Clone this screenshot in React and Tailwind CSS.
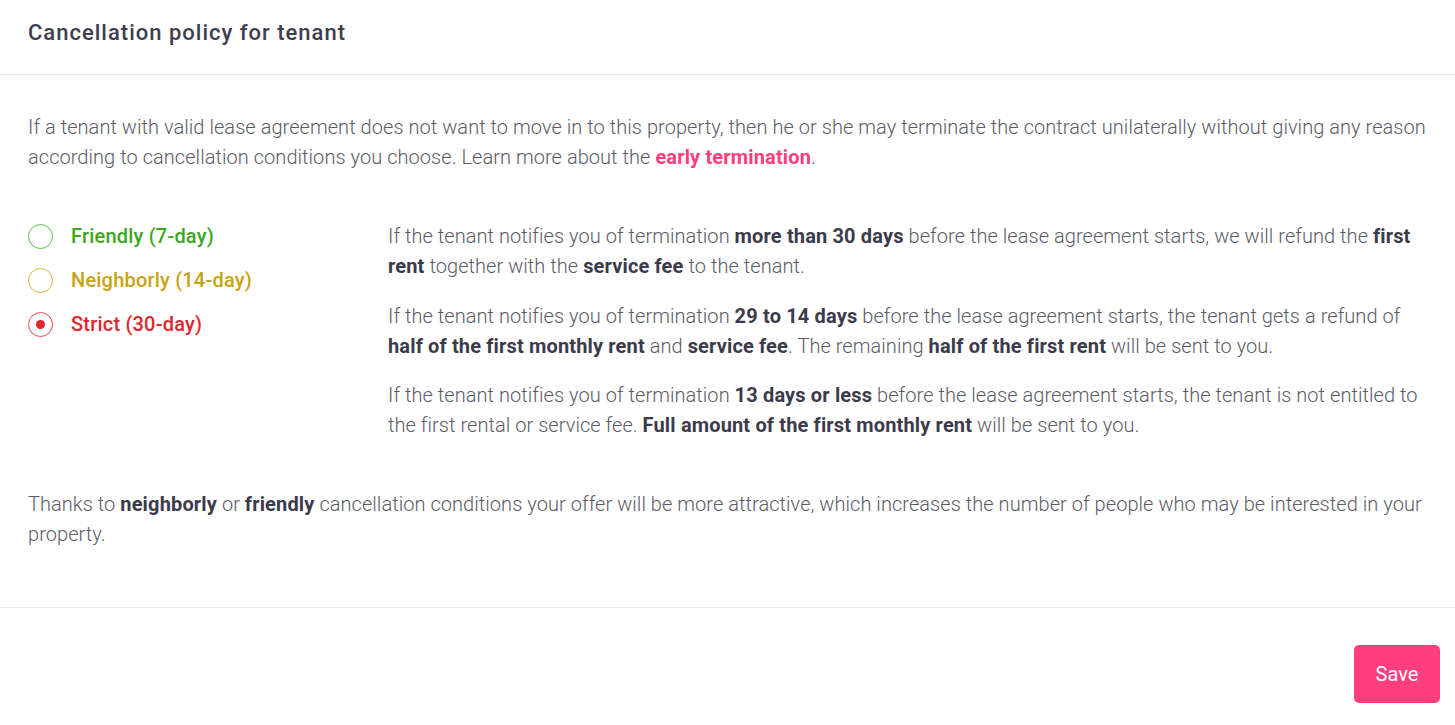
import React, { useState } from "react";

const options = [
  { id: "friendly", label: "Friendly (7-day)", ring: "border-[#5cc24a]", text: "text-[#3ea51f]", dot: "bg-[#3ea51f]" },
  { id: "neighborly", label: "Neighborly (14-day)", ring: "border-[#d2b53a]", text: "text-[#c6a312]", dot: "bg-[#c6a312]" },
  { id: "strict", label: "Strict (30-day)", ring: "border-[#e84a4f]", text: "text-[#e0262c]", dot: "bg-[#e0262c]" },
];

const B = ({ children }) => <strong className="font-bold tracking-[0.15px] text-[#3b3b4b]">{children}</strong>;

const App = () => {
  const [policy, setPolicy] = useState("strict");
  return (
    <div className="w-[1455px] min-h-[725px] bg-white text-[#5b5b68] font-['Roboto',sans-serif]">
      <div className="h-[75px] px-[28px] flex items-center border-b border-[#e8e8ea]">
        <h2 className="text-[22px] tracking-[1px] font-medium text-[#3d3d4f] pb-[10px]">Cancellation policy for tenant</h2>
      </div>

      <div className="px-[28px] pt-[37px] pb-[58px] text-[20px] tracking-[0.05px] leading-[30px] font-light">
        <p>
          If a tenant with valid lease agreement does not want to move in to this property, then he or she may terminate the contract unilaterally without giving any reason according to cancellation conditions you choose. Learn more about the{" "}
          <a className="font-bold tracking-[0.15px] text-[#ff3d7f]">early termination</a>.
        </p>

        <div className="flex mt-[49px]">
          <div className="w-[360px] shrink-0 flex flex-col gap-[14px]">
            {options.map((o) => (
              <label key={o.id} onClick={() => setPolicy(o.id)} className="flex items-center gap-[18px] cursor-pointer h-[30px]">
                <span className={`w-[25px] h-[25px] rounded-full border-[1.5px] flex items-center justify-center ${o.ring}`}>
                  {policy === o.id && <span className={`w-[9px] h-[9px] rounded-full ${o.dot}`} />}
                </span>
                <span className={`font-medium tracking-[0.2px] ${o.text}`}>{o.label}</span>
              </label>
            ))}
          </div>
          <div className="flex-1 flex flex-col gap-[19.5px]">
            <p>
              If the tenant notifies you of termination <B>more than 30 days</B> before the lease agreement starts, we will refund the <B>first rent</B> together with the <B>service fee</B> to the tenant.
            </p>
            <p>
              If the tenant notifies you of termination <B>29 to 14 days</B> before the lease agreement starts, the tenant gets a refund of <B>half of the first monthly rent</B> and <B>service fee</B>. The remaining <B>half of the first rent</B> will be sent to you.
            </p>
            <p>
              If the tenant notifies you of termination <B>13 days or less</B> before the lease agreement starts, the tenant is not entitled to the first rental or service fee. <B>Full amount of the first monthly rent</B> will be sent to you.
            </p>
          </div>
        </div>

        <p className="mt-[49px]">
          Thanks to <B>neighborly</B> or <B>friendly</B> cancellation conditions your offer will be more attractive, which increases the number of people who may be interested in your property.
        </p>
      </div>

      <div className="border-t border-[#e8e8ea] flex justify-end px-[15px] pt-[37px]">
        <button className="w-[86px] h-[58px] rounded-[5px] bg-[#ff3d7f] text-white text-[20px] font-normal">Save</button>
      </div>
    </div>
  );
};

export default App;
